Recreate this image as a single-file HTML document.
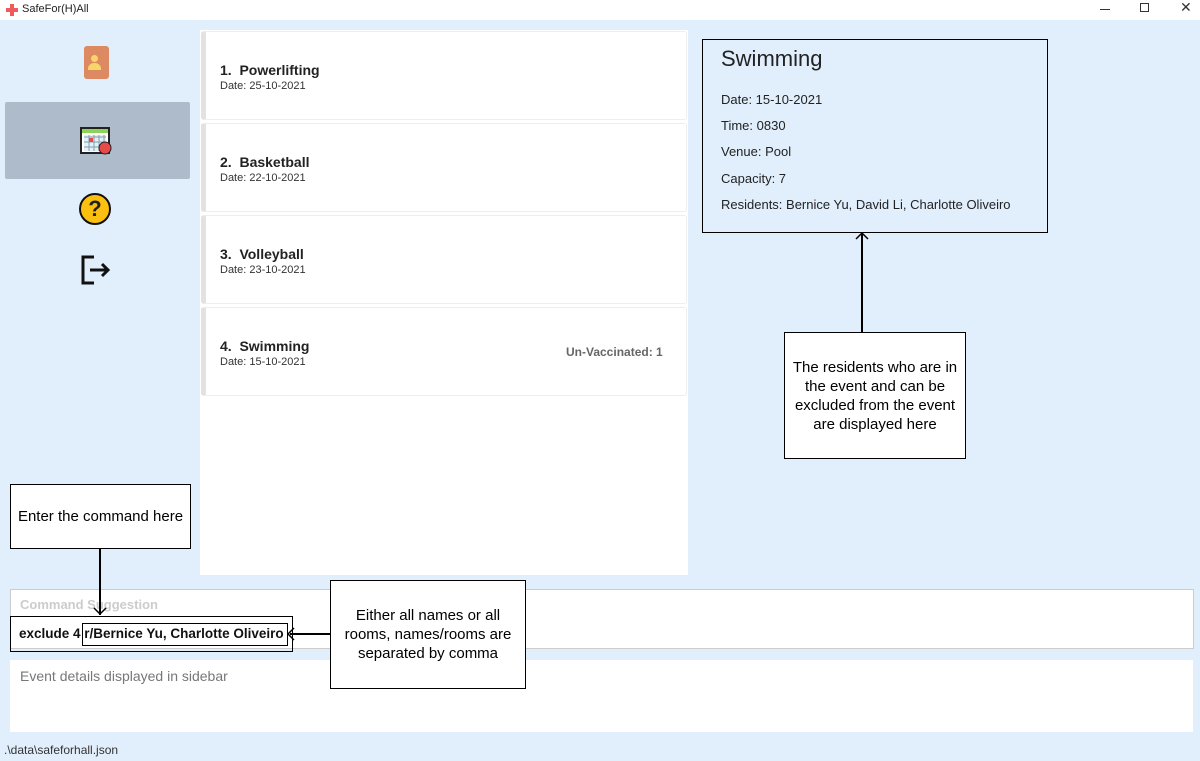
<!DOCTYPE html>
<html><head><style>
*{margin:0;padding:0;box-sizing:border-box}
body{width:1200px;height:761px;background:#e1effd;font-family:"Liberation Sans",sans-serif;position:relative;overflow:hidden;color:#222}
.a{position:absolute}
.card{position:absolute;left:201px;width:486px;height:89px;background:#fff;border:1px solid #eee;border-left:5px solid #e2e2e2;border-radius:3px}
.card b{position:absolute;left:14px;top:30px;font-size:14px;color:#222}
.card span{position:absolute;left:14px;top:48px;font-size:11px;color:#333}
.box{position:absolute;border:1px solid #000;font-size:15px;color:#000;text-align:center;display:flex;align-items:center;justify-content:center;line-height:19px}
.det{font-size:13px;position:absolute;left:18px;color:#222}
</style></head><body>
<div class="a" style="left:0;top:0;width:1200px;height:20px;background:#fff"></div>
<div class="a" style="left:6px;top:4px;width:12px;height:12px">
<div class="a" style="left:4px;top:0;width:4px;height:12px;background:#ef5b5b"></div>
<div class="a" style="left:0;top:4px;width:12px;height:4px;background:#ef5b5b"></div></div>
<div class="a" style="left:22px;top:3px;font-size:11px">SafeFor(H)All</div>
<div class="a" style="left:1100px;top:9px;width:10px;height:1px;background:#333"></div>
<div class="a" style="left:1140px;top:3px;width:9px;height:9px;border:1px solid #333"></div>
<div class="a" style="left:1180px;top:-1px;font-size:14px;color:#333">✕</div>

<!-- sidebar -->
<div class="a" style="left:84px;top:46px;width:25px;height:33px;background:#dd8a62;border-radius:3px"></div>
<div class="a" style="left:91px;top:55px;width:7px;height:7px;border-radius:50%;background:#f7d56b"></div>
<div class="a" style="left:88px;top:63px;width:13px;height:7px;border-radius:6px 6px 0 0;background:#f7d56b"></div>
<div class="a" style="left:5px;top:102px;width:185px;height:77px;background:#adbbcb;border-radius:2px"></div>
<svg class="a" style="left:79px;top:124px" width="34" height="32">
<rect x="2" y="4" width="28" height="25" fill="#fff" stroke="#222" stroke-width="2"/>
<rect x="3" y="5" width="26" height="4" fill="#8cd35a"/>
<path d="M5 13h22M5 18h22M5 23h22M10 11v16M15 11v16M20 11v16M25 11v16" stroke="#555" stroke-width="1"/>
<rect x="5" y="11" width="22" height="16" fill="#bfe3f5" opacity=".5"/>
<rect x="10" y="14" width="4" height="4" fill="#e84a4a"/>
<circle cx="26" cy="24" r="6" fill="#e84a4a" stroke="#222" stroke-width="1"/>
</svg>
<div class="a" style="left:79px;top:193px;width:32px;height:32px;border-radius:50%;background:#fbbf10;border:2px solid #111;text-align:center;font-size:22px;font-weight:bold;line-height:28px">?</div>
<svg class="a" style="left:80px;top:255px" width="32" height="30"><path d="M14 2H3v26h11M10 15h18M22 9l6 6-6 6" fill="none" stroke="#111" stroke-width="3"/></svg>

<!-- list -->
<div class="a" style="left:200px;top:30px;width:488px;height:545px;background:#fff"></div>
<div class="card" style="top:31px"><b>1.&nbsp; Powerlifting</b><span>Date: 25-10-2021</span></div>
<div class="card" style="top:123px"><b>2.&nbsp; Basketball</b><span>Date: 22-10-2021</span></div>
<div class="card" style="top:215px"><b>3.&nbsp; Volleyball</b><span>Date: 23-10-2021</span></div>
<div class="card" style="top:307px"><b>4.&nbsp; Swimming</b><span>Date: 15-10-2021</span><i class="a" style="left:360px;top:37px;font-style:normal;font-weight:bold;font-size:12px;color:#666">Un-Vaccinated: 1</i></div>

<!-- detail -->
<div class="a" style="left:702px;top:39px;width:346px;height:194px;border:1px solid #000">
<div class="det" style="top:6px;font-size:22px">Swimming</div>
<div class="det" style="top:52px">Date: 15-10-2021</div>
<div class="det" style="top:78px">Time: 0830</div>
<div class="det" style="top:104px">Venue: Pool</div>
<div class="det" style="top:131px">Capacity: 7</div>
<div class="det" style="top:157px">Residents: Bernice Yu, David Li, Charlotte Oliveiro</div>
</div>
<div class="a" style="left:861px;top:234px;width:2px;height:99px;background:#000"></div>
<svg class="a" style="left:855px;top:231px" width="14" height="10"><path d="M1 8L7 2L13 8" fill="none" stroke="#000" stroke-width="1.5"/></svg>
<div class="box" style="left:784px;top:332px;width:182px;height:127px;background:#fff">The residents who are in the event and can be excluded from the event are displayed here</div>

<!-- bottom -->
<div class="a" style="left:10px;top:589px;width:1184px;height:60px;background:#fff;border:1px solid #ccc"></div>
<div class="a" style="left:20px;top:597px;font-size:13px;font-weight:bold;color:#ccc">Command Suggestion</div>
<div class="box" style="left:10px;top:484px;width:181px;height:65px;background:#fff">Enter the command here</div>
<div class="a" style="left:99px;top:549px;width:2px;height:66px;background:#000"></div>
<svg class="a" style="left:93px;top:606px" width="14" height="10"><path d="M1 2L7 8L13 2" fill="none" stroke="#000" stroke-width="1.5"/></svg>
<div class="a" style="left:10px;top:616px;width:283px;height:36px;border:1px solid #000"></div>
<div class="a" style="left:82px;top:623px;width:206px;height:23px;border:1px solid #000"></div>
<div class="a" style="left:19px;top:626px;font-size:13.5px;font-weight:bold;color:#111">exclude 4 r/Bernice Yu, Charlotte Oliveiro</div>
<div class="a" style="left:290px;top:633px;width:40px;height:2px;background:#000"></div>
<svg class="a" style="left:286px;top:627px" width="10" height="14"><path d="M8 1L2 7L8 13" fill="none" stroke="#000" stroke-width="1.5"/></svg>
<div class="a" style="left:10px;top:660px;width:1183px;height:72px;background:#fff"></div>
<div class="a" style="left:20px;top:668px;font-size:14px;color:#777">Event details displayed in sidebar</div>
<div class="box" style="left:330px;top:580px;width:196px;height:109px;background:#fff">Either all names or all rooms, names/rooms are separated by comma</div>
<div class="a" style="left:4px;top:743px;font-size:12px;color:#333">.\data\safeforhall.json</div>
</body></html>
